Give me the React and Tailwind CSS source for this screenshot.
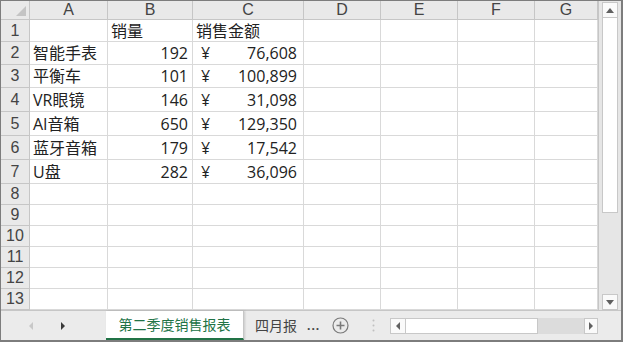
import React from 'react';

const cols = ['A', 'B', 'C', 'D', 'E', 'F', 'G'];
const rowHeights = ['h-[22px]', 'h-[23px]', 'h-[23px]', 'h-[24px]', 'h-[24px]', 'h-[24px]', 'h-[24px]', 'h-[21px]', 'h-[21px]', 'h-[21px]', 'h-[21px]', 'h-[21px]', 'h-[21px]'];
const colWidths = ['w-[78px]', 'w-[85px]', 'w-[111px]', 'w-[77px]', 'w-[77px]', 'w-[77px]', 'w-[63px]'];

const data = [
  { a: '', b: '销量', c: '销售金额', header: true },
  { a: '智能手表', b: '192', c: '76,608' },
  { a: '平衡车', b: '101', c: '100,899' },
  { a: 'VR眼镜', b: '146', c: '31,098' },
  { a: 'AI音箱', b: '650', c: '129,350' },
  { a: '蓝牙音箱', b: '179', c: '17,542' },
  { a: 'U盘', b: '282', c: '36,096' },
];

const Cell = ({ width, children, className = '' }) => (
  <div className={`${width} shrink-0 border-r border-b border-[#d9d9d9] flex items-center ${className}`}>{children}</div>
);

const Row = ({ index }) => {
  const row = data[index];
  return (
    <div className={`flex ${rowHeights[index]}`}>
      <div className="w-[29px] shrink-0 bg-[#e9e9e9] border-r border-b border-[#c6c6c6] flex items-center justify-center text-[16px] text-[#444] font-['Liberation_Sans',sans-serif]">
        {index + 1}
      </div>
      {cols.map((c, i) => {
        if (!row) return <Cell key={c} width={colWidths[i]} />;
        if (i === 0) return <Cell key={c} width={colWidths[i]} className="pl-[3px]">{row.a}</Cell>;
        if (i === 1)
          return (
            <Cell key={c} width={colWidths[i]} className={row.header ? 'pl-[3px]' : 'justify-end pr-[4px]'}>
              {row.b}
            </Cell>
          );
        if (i === 2)
          return (
            <Cell key={c} width={colWidths[i]} className={row.header ? 'pl-[3px]' : 'justify-between pl-[8px] pr-[6px]'}>
              {row.header ? row.c : (<><span>¥</span><span>{row.c}</span></>)}
            </Cell>
          );
        return <Cell key={c} width={colWidths[i]} />;
      })}
    </div>
  );
};

const Tri = ({ dir, color }) => (
  <svg width="6" height="8" viewBox="0 0 6 8" className={dir === 'left' ? 'rotate-180' : ''}>
    <path d="M1 0 L5 4 L1 8 Z" fill={color} />
  </svg>
);

export default function App() {
  return (
    <div className="w-[623px] h-[342px] bg-[#ececec] border border-[#7d7d7d] border-r-2 border-b-2 flex flex-col overflow-hidden font-['Open_Sans','Noto_Sans_CJK_SC',sans-serif] text-[16px] text-[#222]">
      <div className="flex h-[309px]">
        <div className="flex flex-col w-[597px] bg-white">
          <div className="flex h-[19px] bg-[#e9e9e9]">
            <div className="w-[29px] shrink-0 border-r border-b border-[#c6c6c6] relative">
              <svg width="10" height="10" viewBox="0 0 10 10" className="absolute right-[3px] bottom-[3px]">
                <path d="M10 0 L10 10 L0 10 Z" fill="#c4c4c4" />
              </svg>
            </div>
            {cols.map((c, i) => (
              <div key={c} className={`${colWidths[i]} shrink-0 border-r border-b border-[#c6c6c6] flex items-center justify-center text-[16px] text-[#444] font-['Liberation_Sans',sans-serif]`}>
                {c}
              </div>
            ))}
          </div>
          {rowHeights.map((_, i) => (
            <Row key={i} index={i} />
          ))}
        </div>
        <div className="flex-1 flex flex-col items-center bg-[#e6e6e6] border-l border-[#c6c6c6] pt-[1px]">
          <div className="w-[16px] h-[16px] bg-[#fafafa] border border-[#c8c8c8] flex items-center justify-center">
            <svg width="8" height="5" viewBox="0 0 8 5"><path d="M0 5 L4 0 L8 5 Z" fill="#606060" /></svg>
          </div>
          <div className="w-[16px] h-[195px] bg-white border border-[#c8c8c8] border-t-0"></div>
          <div className="flex-1"></div>
          <div className="w-[16px] h-[16px] bg-[#fafafa] border border-[#c8c8c8] flex items-center justify-center">
            <svg width="8" height="5" viewBox="0 0 8 5"><path d="M0 0 L4 5 L8 0 Z" fill="#606060" /></svg>
          </div>
        </div>
      </div>
      <div className="flex-1 flex items-stretch border-t border-[#c6c6c6] bg-[#ebebeb]">
        <div className="w-[105px] flex items-center pl-[27px] gap-[26px]">
          <Tri dir="left" color="#c8c8c8" />
          <Tri dir="right" color="#3a3a3a" />
        </div>
        <div className="w-[138px] bg-white border-b-2 border-[#217346] border-r border-r-[#c6c6c6] flex items-center justify-center text-[#217346] text-[14px] shadow-[1px_0_2px_rgba(0,0,0,0.15)]">
          第二季度销售报表
        </div>
        <div className="flex items-center pl-[11px] text-[#444] text-[14px]">四月报</div>
        <div className="flex items-center pl-[10px] text-[#444] text-[12px] font-bold tracking-[1px]">...</div>
        <div className="flex items-center pl-[12px]">
          <svg width="17" height="17" viewBox="0 0 17 17">
            <circle cx="8.5" cy="8.5" r="7.5" fill="none" stroke="#7a7a7a" strokeWidth="1.2" />
            <path d="M8.5 4.5 V12.5 M4.5 8.5 H12.5" stroke="#7a7a7a" strokeWidth="1.6" />
          </svg>
        </div>
        <div className="flex items-center pl-[23px]">
          <svg width="3" height="13" viewBox="0 0 3 13">
            <circle cx="1.5" cy="1.5" r="1" fill="#c0c0c0" />
            <circle cx="1.5" cy="6.5" r="1" fill="#c0c0c0" />
            <circle cx="1.5" cy="11.5" r="1" fill="#c0c0c0" />
          </svg>
        </div>
        <div className="flex items-center pl-[15px]">
          <div className="flex h-[16px] w-[208px] bg-[#dcdcdc]">
            <div className="w-[16px] bg-[#fafafa] border border-[#c8c8c8] flex items-center justify-center">
              <Tri dir="left" color="#606060" />
            </div>
            <div className="w-[132px] bg-white border border-[#c8c8c8] border-l-0"></div>
            <div className="flex-1"></div>
            <div className="w-[14px] bg-[#fafafa] border border-[#c8c8c8] flex items-center justify-center">
              <Tri dir="right" color="#606060" />
            </div>
          </div>
        </div>
      </div>
    </div>
  );
}
